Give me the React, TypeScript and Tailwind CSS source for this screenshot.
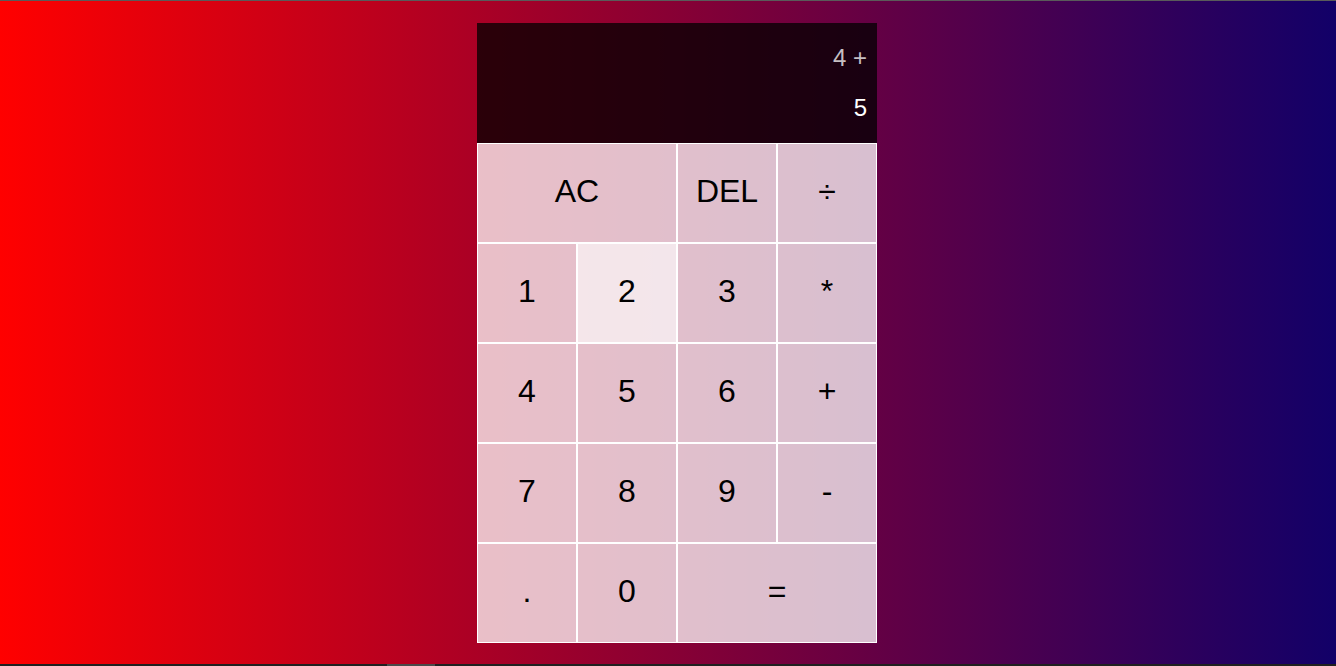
import { useState } from "react";

const cell =
  "flex items-center justify-center border border-white pb-1 text-[32px] text-black cursor-pointer";

export default function App() {
  const [previous] = useState("4 +");
  const [current] = useState("5");

  const rows: Array<{ label: string; span?: boolean; hover?: boolean }> = [
    { label: "AC", span: true },
    { label: "DEL" },
    { label: "÷" },
    { label: "1" },
    { label: "2", hover: true },
    { label: "3" },
    { label: "*" },
    { label: "4" },
    { label: "5" },
    { label: "6" },
    { label: "+" },
    { label: "7" },
    { label: "8" },
    { label: "9" },
    { label: "-" },
    { label: "." },
    { label: "0" },
    { label: "=", span: true },
  ];

  return (
    <div
      className="flex h-[666px] w-full flex-col overflow-hidden"
      style={{ fontFamily: '"Liberation Sans", Arial, sans-serif' }}
    >
      <div className="h-px bg-[#5a5a5a]" />
      <div className="flex flex-1 justify-center bg-[linear-gradient(to_right,#ff0000,#120068)] pl-[18px] pt-[22px]">
        <div className="grid h-[620px] w-[400px] grid-cols-[repeat(4,100px)] grid-rows-[120px_repeat(5,100px)]">
          <div className="col-span-4 flex flex-col items-end justify-around bg-black/75 p-[10px] text-[24px] leading-none">
            <div className="text-white/75">{previous}</div>
            <div className="text-white">{current}</div>
          </div>
          {rows.map((b) => (
            <button
              key={b.label}
              className={`${cell} ${b.span ? "col-span-2" : ""} ${
                b.hover ? "bg-white/90" : "bg-white/75"
              }`}
            >
              {b.label}
            </button>
          ))}
        </div>
      </div>
      <div className="flex h-[2px] bg-[#202020]">
        <div className="ml-[387px] w-[48px] bg-[#4a4a4a]" />
      </div>
    </div>
  );
}
